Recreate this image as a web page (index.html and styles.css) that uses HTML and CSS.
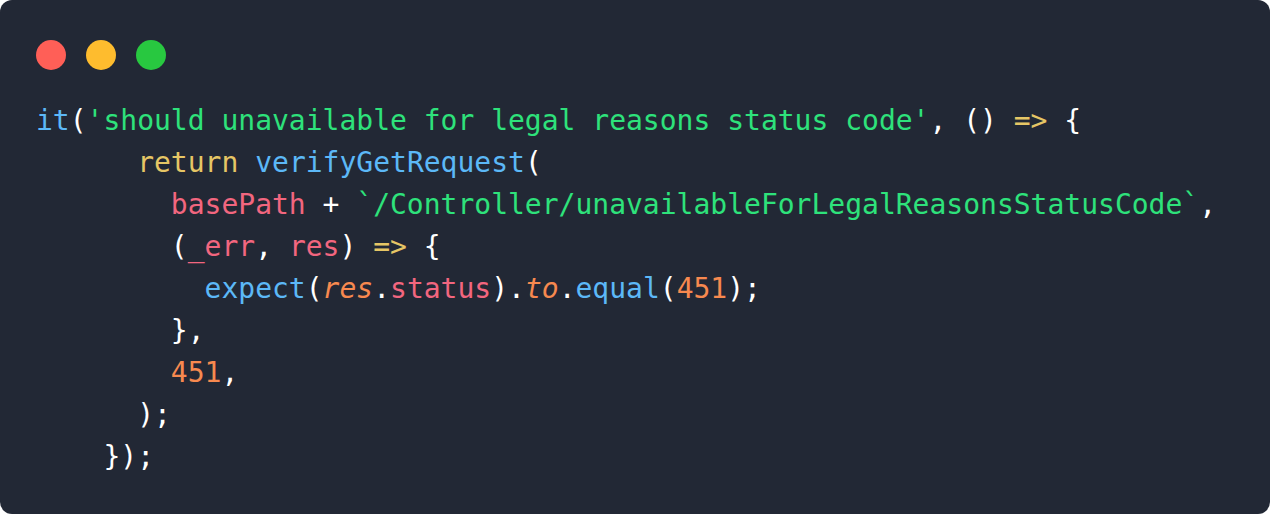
FILE: index.html
```html
<!DOCTYPE html>
<html>
<head>
<meta charset="utf-8">
<link rel="stylesheet" href="styles.css">
</head>
<body>
<div class="card">
  <div class="dots">
    <span class="dot red"></span>
    <span class="dot yellow"></span>
    <span class="dot green"></span>
  </div>
<pre class="code"><span class="fn">it</span><span class="p">(</span><span class="str">'should unavailable for legal reasons status code'</span><span class="p">, () </span><span class="kw">=&gt;</span><span class="p"> {</span>
      <span class="kw">return</span> <span class="fn">verifyGetRequest</span><span class="p">(</span>
        <span class="var">basePath</span><span class="p"> + </span><span class="str">`/Controller/unavailableForLegalReasonsStatusCode`</span><span class="p">,</span>
        <span class="p">(</span><span class="var">_err</span><span class="p">, </span><span class="var">res</span><span class="p">) </span><span class="kw">=&gt;</span><span class="p"> {</span>
          <span class="fn">expect</span><span class="p">(</span><span class="it">res</span><span class="p">.</span><span class="var">status</span><span class="p">).</span><span class="it">to</span><span class="p">.</span><span class="fn">equal</span><span class="p">(</span><span class="num">451</span><span class="p">);</span>
        <span class="p">},</span>
        <span class="num">451</span><span class="p">,</span>
      <span class="p">);</span>
    <span class="p">});</span></pre>
</div>
</body>
</html>
```

FILE: styles.css
```css
html, body {
  margin: 0;
  padding: 0;
  background: #ffffff;
}
.card {
  width: 1270px;
  height: 514px;
  box-sizing: border-box;
  background: #222835;
  border-radius: 12px;
  padding: 40px 0 0 0;
  overflow: hidden;
}
.dots {
  display: flex;
  gap: 20px;
  padding-left: 36px;
}
.dot {
  width: 30px;
  height: 30px;
  border-radius: 50%;
  display: block;
}
.red { background: #ff5f57; }
.yellow { background: #febc2e; }
.green { background: #28c840; }
.code {
  margin: 30px 0 0 0;
  padding-left: 36px;
  font-family: "DejaVu Sans Mono", monospace;
  font-size: 28px;
  line-height: 42px;
  color: #ffffff;
}
.p { color: #ffffff; }
.fn { color: #5cb8f7; }
.str { color: #2ee27b; }
.kw { color: #e6c665; }
.var { color: #f2667f; }
.num { color: #f7894f; }
.it { color: #f7894f; font-style: italic; }
```
